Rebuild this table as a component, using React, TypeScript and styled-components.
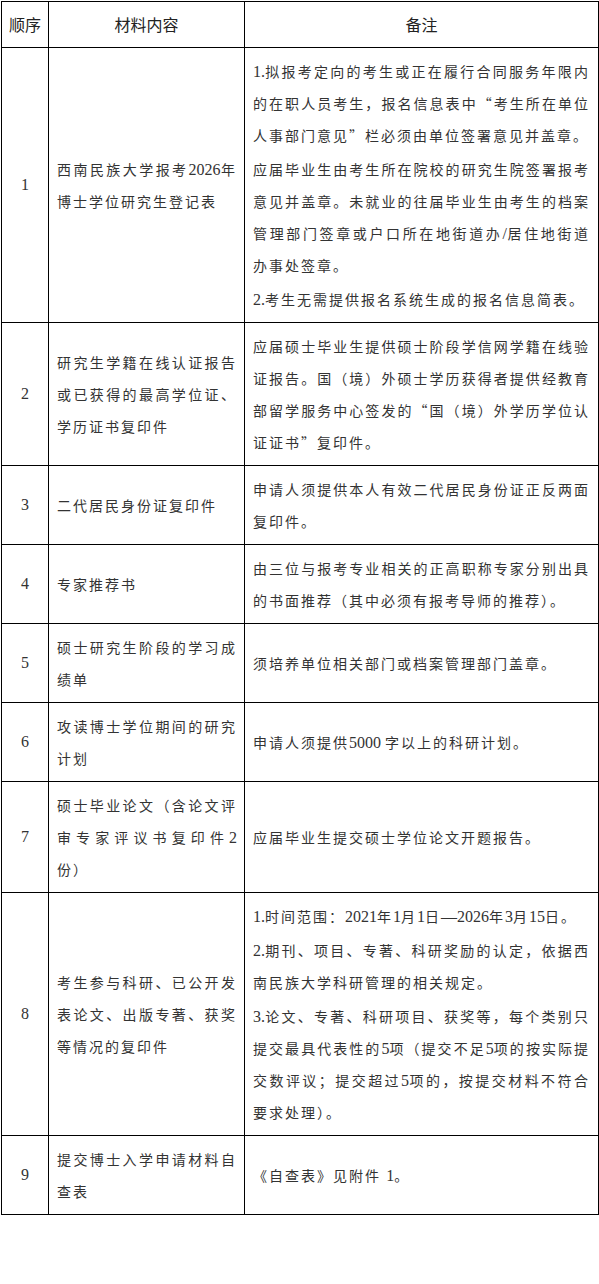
import React from 'react';
import styled, { createGlobalStyle } from 'styled-components';

const GlobalStyle = createGlobalStyle`
  html, body {
    margin: 0;
    padding: 0;
    background: #fff;
  }
  body {
    font-family: 'Noto Sans CJK SC', 'Liberation Serif', sans-serif;
  }
`;

const Page = styled.div`
  width: 599px;
  min-height: 1284px;
  padding: 1px 0 0 1px;
  box-sizing: border-box;
  background: #fff;
`;

const Table = styled.table`
  width: 597px;
  border-collapse: collapse;
  table-layout: fixed;
  color: #333;
`;

const Col = styled.col<{ $w: number }>`
  width: ${(p) => p.$w}px;
`;

const HeadCell = styled.th`
  border: 1px solid #000;
  padding: 7px 0;
  line-height: 31px;
  font-family: 'Noto Sans CJK SC', sans-serif;
  font-size: 16px;
  font-weight: normal;
  color: #222;
  text-align: center;
`;

const NoCell = styled.td`
  border: 1px solid #000;
  padding: 0;
  text-align: center;
  vertical-align: middle;
  font-family: 'Liberation Serif', serif;
  font-size: 16px;
  line-height: 32px;
`;

const TextCell = styled.td<{ $wide?: boolean }>`
  border: 1px solid #000;
  padding: 7px ${(p) => (p.$wide ? '8px' : '7px')} 7px 8px;
  vertical-align: middle;
  font-family: 'Noto Sans CJK SC', sans-serif;
  font-size: 14px;
  letter-spacing: 2px;
  line-height: 32px;
  text-align: justify;
`;

const Para = styled.p`
  margin: 0;
  & + & {
    margin-top: 2px;
  }
`;

// latin runs are set in a serif face, a bit larger, as in the source document
const Num = styled.span`
  font-family: 'Liberation Serif', serif;
  font-size: 16px;
  letter-spacing: 0;
  line-height: 1;
`;

type Row = {
  no: number;
  material: React.ReactNode;
  note: React.ReactNode[];
};

const rows: Row[] = [
  {
    no: 1,
    material: (
      <>
        西南民族大学报考<Num>2026</Num>年博士学位研究生登记表
      </>
    ),
    note: [
      <>
        <Num>1.</Num>拟报考定向的考生或正在履行合同服务年限内的在职人员考生，报名信息表中“考生所在单位人事部门意见”栏必须由单位签署意见并盖章。
      </>,
      <>
        应届毕业生由考生所在院校的研究生院签署报考意见并盖章。未就业的往届毕业生由考生的档案管理部门签章或户口所在地街道办<Num>/</Num>居住地街道办事处签章。
      </>,
      <>
        <Num>2.</Num>考生无需提供报名系统生成的报名信息简表。
      </>,
    ],
  },
  {
    no: 2,
    material: '研究生学籍在线认证报告或已获得的最高学位证、学历证书复印件',
    note: [
      '应届硕士毕业生提供硕士阶段学信网学籍在线验证报告。国（境）外硕士学历获得者提供经教育部留学服务中心签发的“国（境）外学历学位认证证书”复印件。',
    ],
  },
  {
    no: 3,
    material: '二代居民身份证复印件',
    note: ['申请人须提供本人有效二代居民身份证正反两面复印件。'],
  },
  {
    no: 4,
    material: '专家推荐书',
    note: ['由三位与报考专业相关的正高职称专家分别出具的书面推荐（其中必须有报考导师的推荐）。'],
  },
  {
    no: 5,
    material: '硕士研究生阶段的学习成绩单',
    note: ['须培养单位相关部门或档案管理部门盖章。'],
  },
  {
    no: 6,
    material: '攻读博士学位期间的研究计划',
    note: [
      <>
        申请人须提供<Num>5000 </Num>字以上的科研计划。
      </>,
    ],
  },
  {
    no: 7,
    material: (
      <>
        硕士毕业论文（含论文评审专家评议书复印件<Num>2</Num>份）
      </>
    ),
    note: ['应届毕业生提交硕士学位论文开题报告。'],
  },
  {
    no: 8,
    material: '考生参与科研、已公开发表论文、出版专著、获奖等情况的复印件',
    note: [
      <>
        <Num>1.</Num>时间范围：<Num>2021</Num>年<Num>1</Num>月<Num>1</Num>日<Num>—2026</Num>年<Num>3</Num>月<Num>15</Num>日。
      </>,
      <>
        <Num>2.</Num>期刊、项目、专著、科研奖励的认定，依据西南民族大学科研管理的相关规定。
      </>,
      <>
        <Num>3.</Num>论文、专著、科研项目、获奖等，每个类别只提交最具代表性的<Num>5</Num>项（提交不足<Num>5</Num>项的按实际提交数评议；提交超过<Num>5</Num>项的，按提交材料不符合要求处理）。
      </>,
    ],
  },
  {
    no: 9,
    material: '提交博士入学申请材料自查表',
    note: [
      <>
        《自查表》见附件 <Num>1</Num>。
      </>,
    ],
  },
];

export default function App() {
  return (
    <Page>
      <GlobalStyle />
      <Table>
        <colgroup>
          <Col $w={47} />
          <Col $w={196} />
          <Col $w={354} />
        </colgroup>
        <thead>
          <tr>
            <HeadCell>顺序</HeadCell>
            <HeadCell>材料内容</HeadCell>
            <HeadCell>备注</HeadCell>
          </tr>
        </thead>
        <tbody>
          {rows.map((r) => (
            <tr key={r.no}>
              <NoCell>{r.no}</NoCell>
              <TextCell>{r.material}</TextCell>
              <TextCell $wide>
                {r.note.map((n, i) => (
                  <Para key={i}>{n}</Para>
                ))}
              </TextCell>
            </tr>
          ))}
        </tbody>
      </Table>
    </Page>
  );
}
